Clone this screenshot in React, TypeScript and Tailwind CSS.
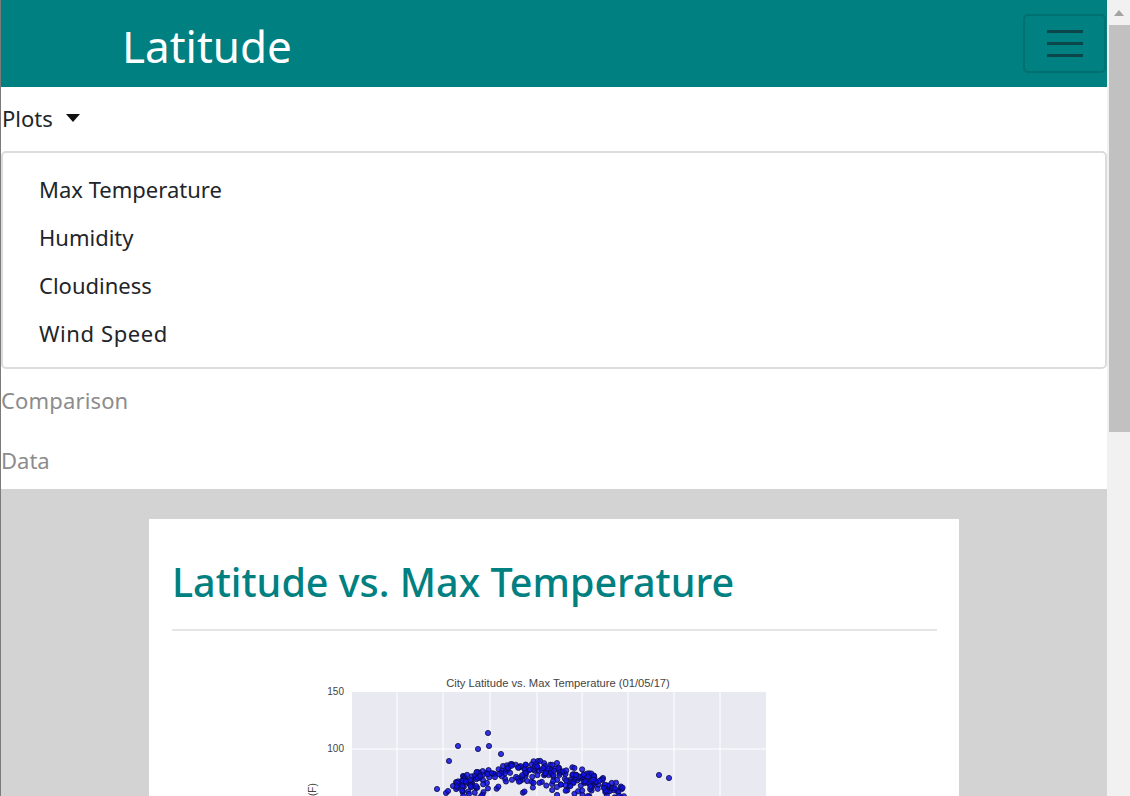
import React from 'react';

const font = { fontFamily: '"Noto Sans", "Open Sans", sans-serif' };

// deterministic scatter so the picture never changes between renders
const outliers: [number, number][] = [
  [488, 733], [458, 746], [478, 749], [489, 746], [501, 754], [449, 761], [437, 789], [659, 775], [669, 778],
  [446, 793], [453, 786], [448, 791], [477, 772], [463, 776], [538, 761], [557, 763], [603, 778],
];

function buildPoints() {
  const pts: [number, number][] = [...outliers];
  let seed = 23;
  const rnd = () => {
    seed = (seed * 16807) % 2147483647;
    return seed / 2147483647;
  };
  for (let i = 0; i < 290; i++) {
    const x = 456 + rnd() * 168;
    const t = (x - 532) / 88;
    const top = 765 + t * t * 22;
    const y = top + rnd() * rnd() * 32 + (rnd() - 0.5) * 9;
    pts.push([x, y]);
  }
  return pts;
}

const GRID_X = [397, 443, 490, 537, 582, 628, 674, 720];

function ScatterPlot() {
  const pts = buildPoints();
  return (
    <svg width="765" height="165" viewBox="172 631 765 165" className="block">
      <text x="558" y="687" textAnchor="middle" fontSize="11.2" fontFamily="Liberation Sans" fill="#444">
        City Latitude vs. Max Temperature (01/05/17)
      </text>
      <rect x="352" y="692" width="414" height="110" fill="#e9e9f2" />
      {GRID_X.map((x) => (
        <line key={x} x1={x} x2={x} y1="692" y2="802" stroke="#ffffff" strokeWidth="1" />
      ))}
      <line x1="352" x2="766" y1="749" y2="749" stroke="#ffffff" strokeWidth="1" />
      <text x="344" y="695" textAnchor="end" fontSize="10" fontFamily="Liberation Sans" fill="#444">150</text>
      <text x="344" y="752" textAnchor="end" fontSize="10" fontFamily="Liberation Sans" fill="#444">100</text>
      <text x="316" y="796" fontSize="10" fontFamily="Liberation Sans" fill="#444" transform="rotate(-90 316 796)">(F)</text>
      {pts.map(([x, y], i) => (
        <circle key={i} cx={x} cy={y} r="2.6" fill="#1010e8" fillOpacity="0.85" stroke="#0a0a40" strokeWidth="0.8" />
      ))}
    </svg>
  );
}

export default function App() {
  return (
    <div className="flex h-[796px] w-[1130px] overflow-hidden bg-white" style={font}>
      <div className="w-px shrink-0 bg-[#7b7b7b]" />

      <div className="flex w-[1106px] shrink-0 flex-col">
        <header className="flex h-[87px] shrink-0 items-center justify-between bg-[#008080] pl-[121px] pr-px">
          <span className="mt-[4px] text-[44px] leading-none text-white">Latitude</span>
          <button className="flex h-[59px] w-[83px] flex-col items-end justify-center gap-[9px] rounded-[5px] border-2 border-[#007070] pr-[21px]">
            <span className="h-[3px] w-[36px] bg-[#0b474a]" />
            <span className="h-[3px] w-[36px] bg-[#0b474a]" />
            <span className="h-[3px] w-[36px] bg-[#0b474a]" />
          </button>
        </header>

        <nav className="shrink-0 bg-white">
          <div className="flex h-[64px] items-center gap-[13px] pb-[2px] pl-px text-[22px] text-[#212529]">
            <span>Plots</span>
            <span className="h-0 w-0 border-x-[7px] border-t-[8px] border-x-transparent border-t-[#111]" />
          </div>
          <div className="h-[218px] rounded-[5px] border-2 border-[#dcdcdc] pb-[12px] pl-[36px] pt-[12px] text-[22px] text-[#212529]">
            <div className="flex h-[48px] items-center">Max Temperature</div>
            <div className="flex h-[48px] items-center">Humidity</div>
            <div className="flex h-[48px] items-center">Cloudiness</div>
            <div className="flex h-[48px] items-center tracking-[0.6px]">Wind Speed</div>
          </div>
          <div className="flex h-[60px] items-center pt-[2px] text-[22px] tracking-[0.15px] text-[#8c8c8c]">Comparison</div>
          <div className="flex h-[60px] items-center pt-[2px] text-[22px] text-[#8c8c8c]">Data</div>
        </nav>

        <main className="min-h-0 flex-1 overflow-hidden bg-[#d3d3d3] pl-[148px] pt-[30px]">
          <section className="h-[400px] w-[810px] bg-white pl-[23px] pr-[22px]">
            <h1 className="flex h-[112px] items-center border-b-2 border-[#e5e5e5] pt-[18px] text-[39.5px] font-medium text-[#008080]">
              Latitude vs. Max Temperature
            </h1>
            <ScatterPlot />
          </section>
        </main>
      </div>

      <div className="flex w-[23px] shrink-0 flex-col bg-[#f1f1f1]">
        <div className="flex h-[25px] items-center justify-center">
          <span className="h-0 w-0 border-x-[5px] border-b-[6px] border-x-transparent border-b-[#a3a3a3]" />
        </div>
        <div className="ml-[2px] h-[407px] bg-[#c1c1c1]" />
      </div>
    </div>
  );
}
